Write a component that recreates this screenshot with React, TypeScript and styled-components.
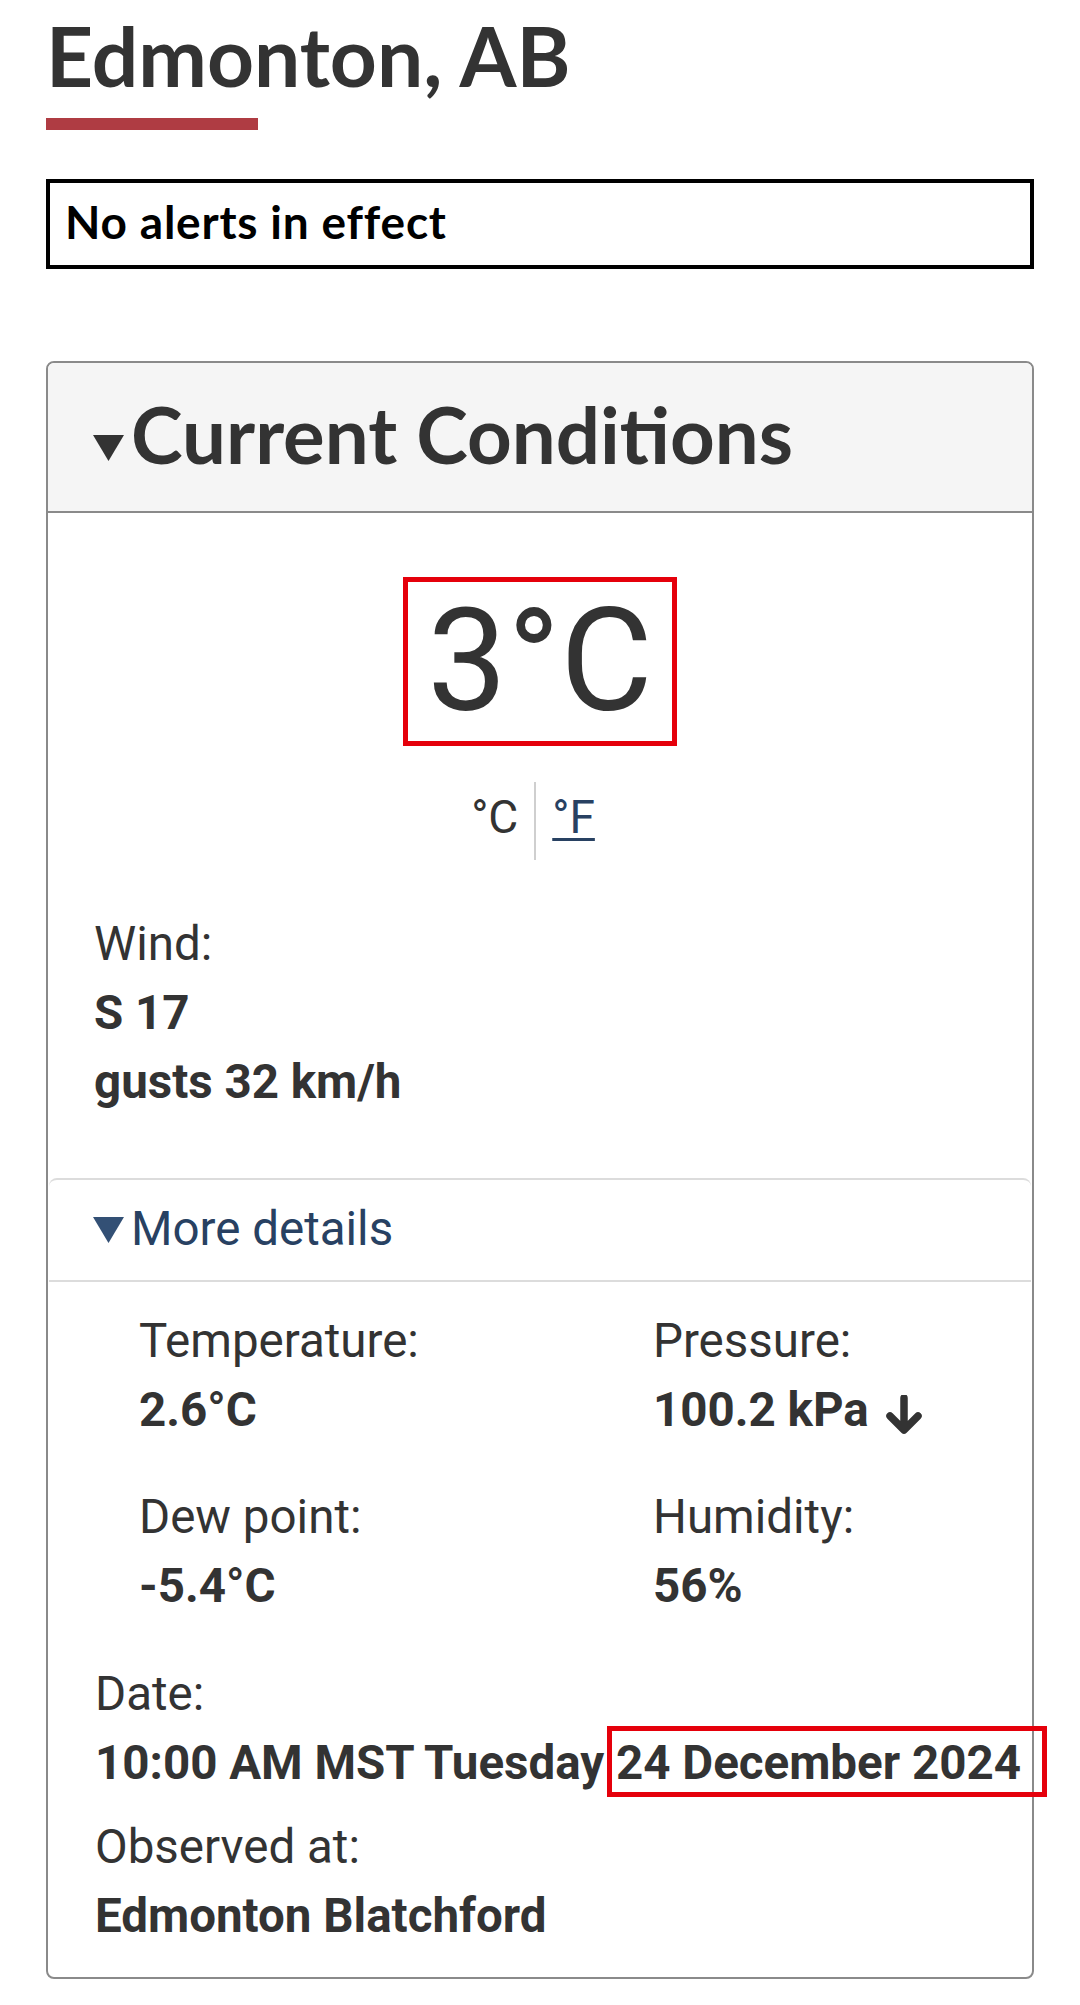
import React from "react";
import styled, { createGlobalStyle } from "styled-components";

const GlobalStyle = createGlobalStyle`
  body {
    margin: 0;
    background: #fff;
    color: #333;
    font-family: Roboto, "Noto Sans", sans-serif;
  }
`;

const Page = styled.main`
  width: 1080px;
  box-sizing: border-box;
  padding: 7px 46px 40px 46px;
`;

const Title = styled.h1`
  margin: 0;
  font-family: Lato, "Open Sans", sans-serif;
  font-weight: 700;
  font-size: 82px;
  line-height: 96px;
  color: #333;
  &::after {
    content: "";
    display: block;
    width: 212px;
    height: 12px;
    margin-top: 15px;
    background: #af3c43;
  }
`;

const AlertBox = styled.section`
  margin-top: 49px;
  border: 4px solid #000;
  padding: 0 0 4px 15px;
  font-family: Lato, "Open Sans", sans-serif;
  font-weight: 700;
  font-size: 46px;
  letter-spacing: 0.8px;
  line-height: 78px;
  color: #000;
`;

const Card = styled.section`
  margin-top: 92px;
  border: 2px solid #8a8a8a;
  border-radius: 8px;
`;

const CardHeader = styled.h2`
  margin: 0;
  display: flex;
  align-items: flex-start;
  padding: 24px 0 30px 45px;
  background: #f5f5f5;
  border-bottom: 2px solid #8a8a8a;
  border-radius: 6px 6px 0 0;
  font-family: Lato, "Open Sans", sans-serif;
  font-weight: 700;
  font-size: 78px;
  line-height: 94px;
  color: #333;
`;

const Caret = styled.svg<{ $top: number }>`
  flex: none;
  margin-top: ${(p) => p.$top}px;
  margin-right: 7px;
`;

const CardBody = styled.div`
  display: flex;
  flex-direction: column;
`;

const BigTemp = styled.div`
  align-self: center;
  margin-top: 64px;
  width: 274px;
  box-sizing: border-box;
  border: 5px solid #e5000b;
  text-align: center;
  font-size: 142px;
  line-height: 159px;
  font-weight: 400;
  color: #333;
`;

const UnitRow = styled.div`
  align-self: center;
  display: flex;
  align-items: flex-start;
  margin: 36px 14px 0 0;
  font-size: 46px;
  line-height: 70px;
`;

const Unit = styled.span<{ $link?: boolean }>`
  padding: 0 16px;
  color: ${(p) => (p.$link ? "#284162" : "#333")};
  text-decoration: ${(p) => (p.$link ? "underline" : "none")};
  text-decoration-thickness: 3px;
  text-underline-offset: 5px;
`;

const UnitDivider = styled.span`
  width: 2px;
  height: 78px;
  background: #cfcfcf;
`;

const Block = styled.dl<{ $top: number }>`
  margin: ${(p) => p.$top}px 0 0 46px;
  font-size: 47.5px;
  line-height: 69px;
`;

const Label = styled.dt`
  font-weight: 400;
`;

const Value = styled.dd`
  margin: 0;
  font-weight: 700;
  white-space: nowrap;
`;

const Details = styled.div`
  margin: 61px 1px 0;
  border-top: 2px solid #dcdcdc;
  border-radius: 8px 8px 0 0;
`;

const Summary = styled.div`
  display: flex;
  align-items: flex-start;
  padding: 15px 0 16px 44px;
  border-bottom: 2px solid #dcdcdc;
  font-size: 47.5px;
  line-height: 69px;
  color: #284162;
`;

const DetailsBody = styled.div`
  padding: 25px 0 26px;
`;

const Grid = styled.div`
  display: grid;
  grid-template-columns: 514px 1fr;
  row-gap: 38px;
  margin-left: 90px;
  font-size: 47.5px;
  line-height: 69px;
`;

const Cell = styled.dl`
  margin: 0;
`;

const Marked = styled.span`
  position: relative;
  &::after {
    content: "";
    position: absolute;
    top: -9px;
    bottom: -6px;
    left: -9px;
    right: -26px;
    border: 5px solid #e5000b;
  }
`;

const ArrowDown = () => (
  <svg
    width="38"
    height="40"
    viewBox="0 0 38 40"
    style={{ verticalAlign: "-9px", marginLeft: "4px" }}
  >
    <path
      d="M19 3 V34 M5 21 L19 35 L33 21"
      fill="none"
      stroke="#333"
      strokeWidth="7.5"
      strokeLinecap="round"
      strokeLinejoin="round"
    />
  </svg>
);

export default function App() {
  return (
    <>
      <GlobalStyle />
      <Page>
        <Title>Edmonton, AB</Title>
        <AlertBox>No alerts in effect</AlertBox>

        <Card>
          <CardHeader>
            <Caret $top={48} width="31" height="26" viewBox="0 0 31 26">
              <polygon points="0,0 31,0 15.5,26" fill="#333" />
            </Caret>
            Current Conditions
          </CardHeader>

          <CardBody>
            <BigTemp>3°C</BigTemp>
            <UnitRow>
              <Unit>°C</Unit>
              <UnitDivider />
              <Unit $link>°F</Unit>
            </UnitRow>

            <Block $top={50}>
              <Label>Wind:</Label>
              <Value>S 17</Value>
              <Value>gusts 32 km/h</Value>
            </Block>

            <Details>
              <Summary>
                <Caret $top={22} width="31" height="26" viewBox="0 0 31 26">
                  <polygon points="0,0 31,0 15.5,26" fill="#335075" />
                </Caret>
                More details
              </Summary>
              <DetailsBody>
                <Grid>
                  <Cell>
                    <Label>Temperature:</Label>
                    <Value>2.6°C</Value>
                  </Cell>
                  <Cell>
                    <Label>Pressure:</Label>
                    <Value>
                      100.2 kPa <ArrowDown />
                    </Value>
                  </Cell>
                  <Cell>
                    <Label>Dew point:</Label>
                    <Value>-5.4°C</Value>
                  </Cell>
                  <Cell>
                    <Label>Humidity:</Label>
                    <Value>56%</Value>
                  </Cell>
                </Grid>

                <Block $top={39}>
                  <Label>Date:</Label>
                  <Value>
                    10:00 AM MST Tuesday <Marked>24 December 2024</Marked>
                  </Value>
                </Block>
                <Block $top={15}>
                  <Label>Observed at:</Label>
                  <Value>Edmonton Blatchford</Value>
                </Block>
              </DetailsBody>
            </Details>
          </CardBody>
        </Card>
      </Page>
    </>
  );
}
